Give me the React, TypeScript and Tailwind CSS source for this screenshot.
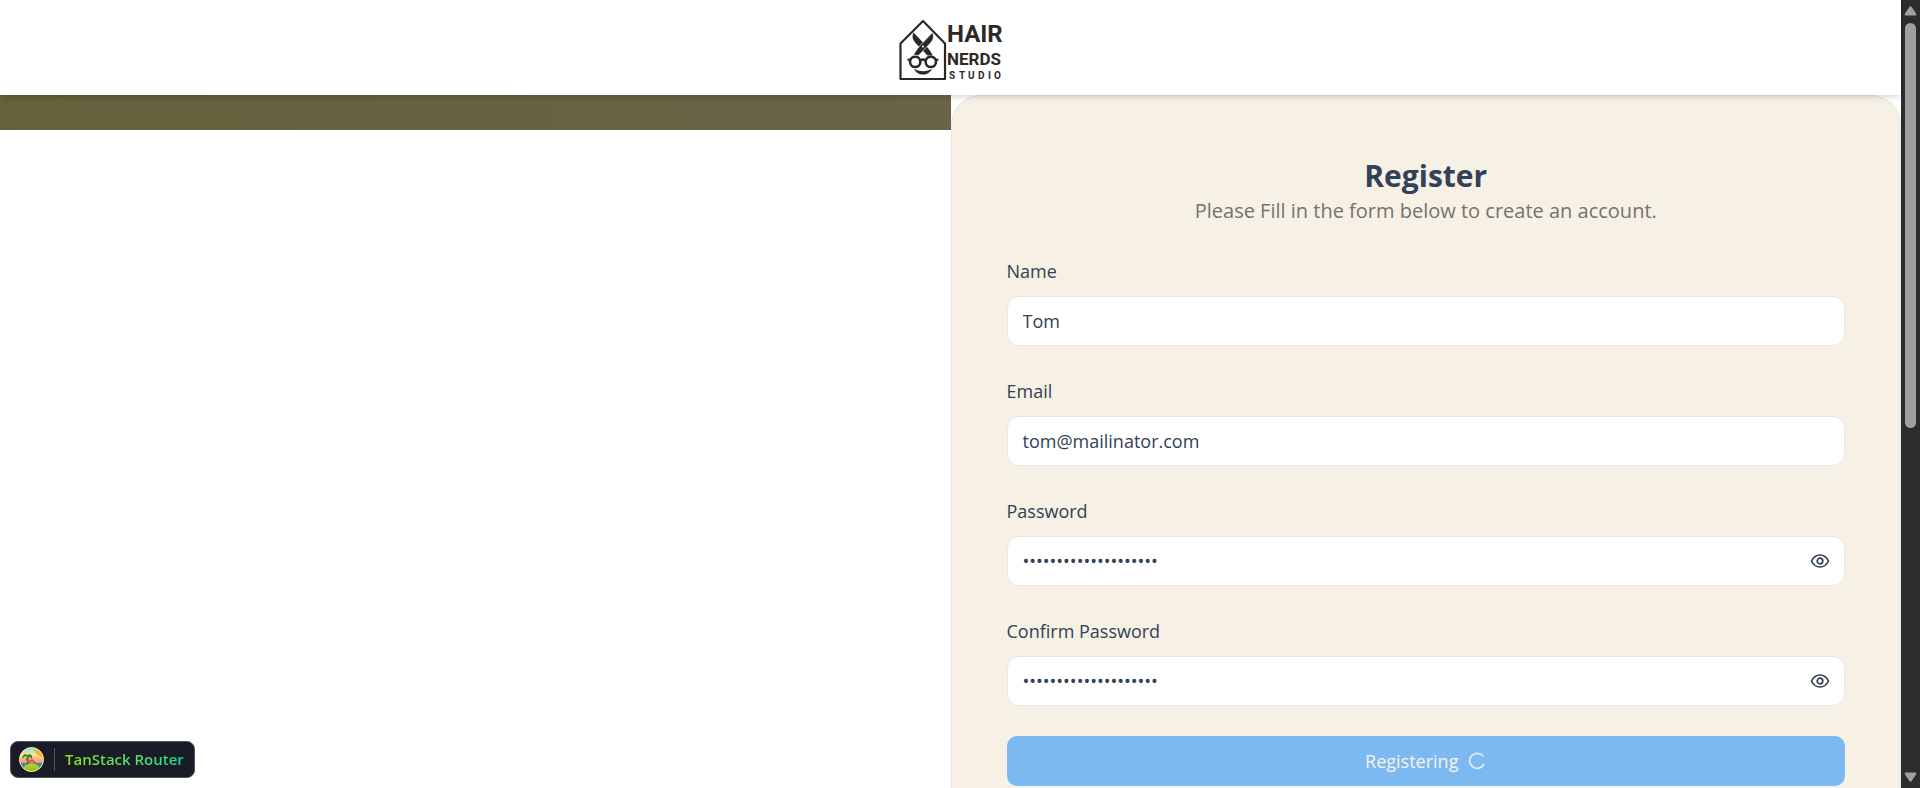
import { useState } from "react";
import type { ReactNode } from "react";

function Logo() {
  return (
    <svg width="104" height="62" viewBox="0 0 104 62" role="img" aria-label="Hair Nerds Studio">
      <g fill="none" stroke="#2b2925" strokeWidth="2.200" strokeLinejoin="round">
        <path d="M1.500 60V24.500L24 2L46 24.500V60Z" />
        <circle cx="16.200" cy="42.800" r="5.200" strokeWidth="2.600" />
        <circle cx="31.800" cy="42.800" r="5.200" strokeWidth="2.600" />
        <path d="M21.500 41.500Q24 39.500 26.500 41.500M8.500 40.500L12 41.200M39.500 40.500L36 41.200" />
      </g>
      <path d="M14.500 13.500C12.500 18 14 21 17 24.500L28.500 36.500L33.500 36C31 31 27.500 27 24 23.500Z" fill="#2b2925" />
      <path d="M33.500 13.500C35.500 18 34 21 31 24.500L19.500 36.500L14.500 36C17 31 20.500 27 24 23.500Z" fill="#2b2925" stroke="#fff" strokeWidth="0.600" />
      <circle cx="24" cy="27.500" r="1" fill="#fff" />
      <path d="M15 49.500C18 57.500 30 57.500 33 49.500C28.500 53 19.500 53 15 49.500Z" fill="#2b2925" />
      <g fill="#2b2925" className="font-[Roboto,sans-serif] font-bold">
        <text x="48" y="23" fontSize="24">HAIR</text>
        <text x="48" y="46" fontSize="17">NERDS</text>
        <text y="60" fontSize="10" x="50 60 69 79 89 95">STUDIO</text>
      </g>
    </svg>
  );
}

function EyeIcon() {
  return (
    <svg width="20" height="20" viewBox="0 0 20 20" fill="none" stroke="#334155" strokeWidth="1.700" aria-hidden="true">
      <path d="M1.500 10C3.500 5.800 6.500 4 10 4S16.500 5.800 18.500 10C16.500 14.200 13.500 16 10 16S3.500 14.200 1.500 10Z" strokeLinejoin="round" />
      <circle cx="10" cy="10" r="2.800" />
    </svg>
  );
}

function IslandIcon() {
  return (
    <svg width="25" height="25" viewBox="0 0 25 25" aria-hidden="true">
      <defs>
        <linearGradient id="sky" x1="0" y1="0" x2="0" y2="1">
          <stop offset="0" stopColor="#6fe0ee" />
          <stop offset="0.300" stopColor="#f9e49a" />
          <stop offset="0.650" stopColor="#f9896a" />
        </linearGradient>
        <linearGradient id="hill" x1="0" y1="0" x2="0" y2="1">
          <stop offset="0" stopColor="#c3d62a" />
          <stop offset="1" stopColor="#6fa814" />
        </linearGradient>
        <clipPath id="disc"><circle cx="12.500" cy="12.500" r="12" /></clipPath>
      </defs>
      <g clipPath="url(#disc)">
        <rect width="25" height="25" fill="url(#sky)" />
        <path d="M15 3L24 2V10Q18 9 15 3Z" fill="#ffb020" />
        <rect y="16" width="25" height="9" fill="#2a97a4" />
        <ellipse cx="12.500" cy="22.500" rx="8.500" ry="6" fill="url(#hill)" />
        <path d="M8.500 9C9.500 12 9.500 14 8.500 17" fill="none" stroke="#7a3f1d" strokeWidth="1.300" />
        <path d="M8.500 8C5 5.500 3 9 3.500 12C5 9.500 7 9 8.500 9.500C6.500 11 6.500 13 7 14C8 11.500 9 10.500 9 10C11 10 12.500 11 13 13C14 9 12 6 8.500 8Z" fill="#2d8a2a" />
        <path d="M10 15.500L13 13L16 16" fill="none" stroke="#e6306b" strokeWidth="1.500" />
      </g>
      <circle cx="12.500" cy="12.500" r="12" fill="none" stroke="#f4e8ae" strokeWidth="1" />
    </svg>
  );
}

const inputClass =
  "block h-[50px] w-full rounded-xl border border-gray-200 bg-white px-[15px] text-[18px] text-slate-700 outline-none";

function Field({ id, label, children }: { id: string; label: string; children: ReactNode }) {
  return (
    <div className="flex flex-col gap-[10px]">
      <label htmlFor={id} className="text-[18px] leading-[30px] font-medium text-slate-700">
        {label}
      </label>
      {children}
    </div>
  );
}

function PasswordInput({ id }: { id: string }) {
  const [visible, setVisible] = useState(false);
  return (
    <div className="relative">
      <input
        id={id}
        type={visible ? "text" : "password"}
        defaultValue="registerpassword1234"
        className={inputClass}
      />
      <button
        type="button"
        aria-label="Show password"
        onClick={() => setVisible(!visible)}
        className="absolute inset-y-0 right-[15px] flex items-center"
      >
        <EyeIcon />
      </button>
    </div>
  );
}

function ScrollRail() {
  return (
    <div aria-hidden="true" className="flex w-[19px] shrink-0 flex-col items-center bg-[#2c2c2c] py-[5px]">
      <svg width="13" height="11" viewBox="0 0 13 11" fill="#9f9f9f">
        <path d="M5.500 1.800Q6.500 0.500 7.500 1.800L12 8.500Q13 10.500 11 10.500H2Q0 10.500 1 8.500Z" />
      </svg>
      <div className="flex w-[11px] grow flex-col py-[7px]">
        <div className="grow-6 rounded-full bg-[#9f9f9f]" />
        <div className="grow-5" />
      </div>
      <svg width="13" height="11" viewBox="0 0 13 11" fill="#9f9f9f">
        <path d="M5.500 9.200Q6.500 10.500 7.500 9.200L12 2.500Q13 0.500 11 0.500H2Q0 0.500 1 2.500Z" />
      </svg>
    </div>
  );
}

export default function App() {
  return (
    <div className="flex h-screen overflow-hidden bg-white font-['Open_Sans',sans-serif] text-slate-700">
      <div className="flex min-w-0 grow flex-col">
        <header className="z-10 flex h-[95px] shrink-0 items-center justify-center bg-white pt-[5px] shadow-md">
          <a href="#home">
            <Logo />
          </a>
        </header>
        <main className="grid grow grid-cols-2">
          <div>
            <div className="h-[35px] bg-linear-to-r from-[#66603b] to-[#6b6347]" />
          </div>
          <section className="rounded-t-[30px] border border-b-0 border-gray-200 bg-[#f7f0e4] px-[55px] pt-[60px]">
            <div className="text-center">
              <h1 className="text-[30px] leading-[40px] font-bold">Register</h1>
              <p className="text-[20px] leading-[30px] text-[#737373]">
                Please Fill in the form below to create an account.
              </p>
            </div>
            <form className="flex flex-col gap-[30px] pt-[30px]" onSubmit={(e) => e.preventDefault()}>
              <Field id="name" label="Name">
                <input id="name" type="text" defaultValue="Tom" className={inputClass} />
              </Field>
              <Field id="email" label="Email">
                <input id="email" type="email" defaultValue="tom@mailinator.com" className={inputClass} />
              </Field>
              <Field id="password" label="Password">
                <PasswordInput id="password" />
              </Field>
              <Field id="confirm" label="Confirm Password">
                <PasswordInput id="confirm" />
              </Field>
              <button
                type="submit"
                className="flex h-[50px] items-center justify-center gap-[10px] rounded-[10px] bg-[#7cb9f0] text-[18px] font-medium text-[#f7f3ee]"
              >
                Registering
                <svg width="18" height="18" viewBox="0 0 18 18" fill="none" stroke="#e4edf2" strokeWidth="1.700" strokeLinecap="round" aria-hidden="true">
                  <path d="M14.800 3.800A7.500 7.500 0 1 0 15.700 12.500" />
                </svg>
              </button>
            </form>
          </section>
        </main>
      </div>
      <ScrollRail />
      <button
        type="button"
        className="fixed bottom-[10px] left-[10px] z-20 flex h-[37px] items-center gap-[10px] rounded-lg border border-[#475467] bg-[#191c24] pr-[10px] pl-2 text-[15px] font-semibold"
      >
        <IslandIcon />
        <span className="h-[23px] w-px bg-[#475467]" />
        <span className="bg-linear-to-r from-[#84e600] to-[#10d896] bg-clip-text text-transparent">TanStack Router</span>
      </button>
    </div>
  );
}
